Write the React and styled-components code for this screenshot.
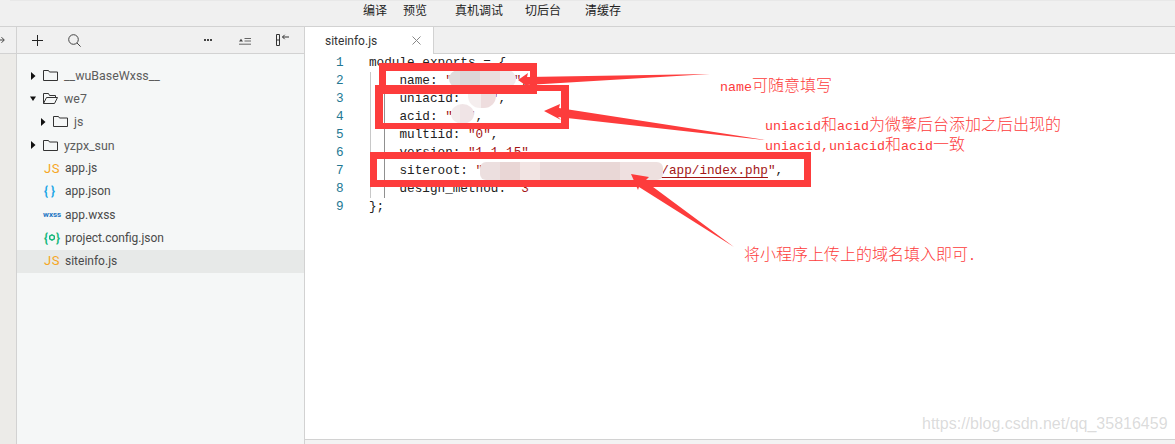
import React from 'react';
import styled, { createGlobalStyle } from 'styled-components';

const RED = '#fd3c3c';

const GlobalStyle = createGlobalStyle`
  html, body { margin: 0; padding: 0; background: #fff; }
  body { width: 1175px; height: 444px; overflow: hidden; font-family: Roboto, "Noto Sans CJK SC", sans-serif; }
`;

const tree = [
  { name: '__wuBaseWxss__', folder: 'closed', depth: 0 },
  { name: 'we7', folder: 'open', depth: 0 },
  { name: 'js', folder: 'closed', depth: 1 },
  { name: 'yzpx_sun', folder: 'closed', depth: 0 },
  { name: 'app.js', file: 'js' },
  { name: 'app.json', file: 'json' },
  { name: 'app.wxss', file: 'wxss' },
  { name: 'project.config.json', file: 'config' },
  { name: 'siteinfo.js', file: 'js', active: true },
];

function Caret({ open }) {
  return (
    <CaretBox viewBox="0 0 6 8">
      {open ? <path d="M0 1.5h6L3 6z" fill="#111" /> : <path d="M1 0l4.5 4L1 8z" fill="#111" />}
    </CaretBox>
  );
}

function Folder({ open }) {
  return (
    <FolderBox viewBox="0 0 15 11" fill="none" stroke="#333" strokeWidth="1">
      {open
        ? <path d="M.5 10.5V.5h5l1 2h6v2M.5 10.5h11l3-6H3.5z" />
        : <path d="M.5 10.5V.5h5l1 1.5h8v8.5z" />}
    </FolderBox>
  );
}

function FileIcon({ type }) {
  if (type === 'js') return <JsIcon>JS</JsIcon>;
  if (type === 'json') return <JsonIcon>{'{ }'}</JsonIcon>;
  if (type === 'wxss') return <WxssIcon>wxss</WxssIcon>;
  return (
    <ConfigIcon>
      {'{'}
      <svg width="6" height="7" viewBox="0 0 6 7" fill="none" stroke="#13b77c" strokeWidth="1.4">
        <path d="M3 .8l2.3 1.35v2.7L3 6.2.7 4.85v-2.7z" />
      </svg>
      {'}'}
    </ConfigIcon>
  );
}

// builds hard colour bands for the blurred-out parts of the code
const bands = (stops) => {
  let from = 0;
  const parts = stops.map(([color, to]) => {
    const part = `${color} ${from}px ${to}px`;
    from = to;
    return part;
  });
  return `linear-gradient(90deg, ${parts.join(', ')})`;
};

const patches = [
  { x: 449, y: 70, w: 67, h: 18, r: '9px', bg: bands([['#e0dcdc', 11], ['#dcd6d7', 31], ['#eadede', 51], ['#f0e8ea', 67]]) },
  { x: 468, y: 91, w: 28, h: 17, r: '0 0 12px 12px', bg: bands([['#f5eeee', 13], ['#eeddde', 28]]) },
  { x: 451, y: 104, w: 23, h: 20, r: '50%', bg: bands([['#f3ecec', 9], ['#f0e4e6', 23]]) },
  { x: 480, y: 162, w: 183, h: 18, r: '6px', bg: bands([['#ecdfdf', 20], ['#e9d6d5', 40], ['#f2e4e3', 60], ['#ead9d9', 120], ['#e9d7d6', 140], ['#efe0e0', 160], ['#eee0df', 183]]) },
];

export default function App() {
  const code = [
    { text: <>module exports = {'{'}</> },
    { text: <>    name: <Str>"        "</Str>,</>, guide: true },
    { text: <>    uniacid: <Str>"  "</Str>,</>, guide: true },
    { text: <>    acid: <Str>"  "</Str>,</>, guide: true },
    { text: <>    multiid: <Str>"0"</Str>,</>, guide: true },
    { text: <>    version: <Str>"1.1.15"</Str>,</>, guide: true },
    { text: <>    siteroot: <Str>"                       <Link>/app/index.php</Link>"</Str>,</>, guide: true },
    { text: <>    design_method: <Str>"3"</Str></>, guide: true },
    { text: <>{'};'}</> },
  ];

  return (
    <Page>
      <GlobalStyle />
      <TopBar>
        <TopEdge />
        <TopMenu>
          <TopItem $gap={16}>编译</TopItem>
          <TopItem $gap={28}>预览</TopItem>
          <TopItem $gap={22}>真机调试</TopItem>
          <TopItem $gap={24}>切后台</TopItem>
          <TopItem>清缓存</TopItem>
        </TopMenu>
      </TopBar>
      <Body>
        <Rail>
          <RailHead>
            <svg width="6" height="8" viewBox="0 0 6 8" fill="none" stroke="#444" strokeWidth="1">
              <path d="M0 4h5M2.5 1.2L5.3 4 2.5 6.8" />
            </svg>
          </RailHead>
        </Rail>
        <Sidebar>
          <SideTools>
            <ToolIcon $left={15} width="11" height="11" viewBox="0 0 11 11" stroke="#222" fill="none">
              <path d="M5.5 0v11M0 5.5h11" />
            </ToolIcon>
            <ToolIcon $left={25} width="13" height="13" viewBox="0 0 13 13" stroke="#444" fill="none">
              <circle cx="5.5" cy="5.5" r="4.8" />
              <path d="M9 9l3.6 3.6" />
            </ToolIcon>
            <ToolIcon $left={123} width="8" height="3" viewBox="0 0 8 3" fill="#444">
              <path d="M0 0h2v2H0zM3 0h2v2H3zM6 0h2v2H6z" />
            </ToolIcon>
            <ToolIcon $left={27} width="12" height="9" viewBox="0 0 12 9" fill="none" stroke="#666">
              <path d="M5.5 2.5h6.5M5.5 5h6.5M0 8.2h12" />
              <path d="M0 5.4l2-2.6 2 2.6z" fill="#444" stroke="none" />
            </ToolIcon>
            <ToolIcon $left={25} width="13" height="12" viewBox="0 0 13 12" fill="none" stroke="#333">
              <path d="M.5.5h3v11h-3zM.5 6h3" />
              <path d="M13 3H6.5M8.7.8L6.5 3l2.2 2.2" />
            </ToolIcon>
          </SideTools>
          <Tree>
            {tree.map((item) => (
              <TreeRow key={item.name} $active={item.active} $depth={item.depth || 0}>
                {item.folder ? (
                  <>
                    <Caret open={item.folder === 'open'} />
                    <Folder open={item.folder === 'open'} />
                    <FolderName>{item.name}</FolderName>
                  </>
                ) : (
                  <>
                    <FileSlot><FileIcon type={item.file} /></FileSlot>
                    <FileName>{item.name}</FileName>
                  </>
                )}
              </TreeRow>
            ))}
          </Tree>
        </Sidebar>
        <Editor>
          <TabBar>
            <Tab>
              siteinfo.js
              <svg width="9" height="9" viewBox="0 0 9 9" stroke="#888" fill="none">
                <path d="M.5.5l8 8M8.5.5l-8 8" />
              </svg>
            </Tab>
          </TabBar>
          <CodeArea>
            {code.map((line, i) => (
              <CodeRow key={i}>
                <LineNo>{i + 1}</LineNo>
                <CodeText $guide={line.guide}>{line.text}</CodeText>
              </CodeRow>
            ))}
          </CodeArea>
          <BottomStrip />
        </Editor>
      </Body>

      {patches.map((p, i) => (
        <Patch key={i} $x={p.x} $y={p.y} $w={p.w} $h={p.h} $r={p.r} $bg={p.bg} />
      ))}
      <Frame $x={379} $y={63} $w={158} $h={31} $tx={7} $ty={8} />
      <Frame $x={375} $y={85} $w={194} $h={44} $tx={8} $ty={6} />
      <Frame $x={370} $y={152} $w={441} $h={35} $tx={7} $ty={7} />

      <Arrows width="1175" height="444" viewBox="0 0 1175 444" fill={RED}>
        <path d="M518 80l10-7-1 4 183-3-183 11 4 4z" />
        <path d="M544 111l16-7-1 4 206 32-207-23 3 3z" />
        <path d="M631 174l18 3-4 4 89 66-95-60-1 3z" />
      </Arrows>

      <Note $x={720} $y={77}><Lat>name</Lat>可随意填写</Note>
      <Note $x={765} $y={116}><Lat>uniacid</Lat>和<Lat>acid</Lat>为微擎后台添加之后出现的</Note>
      <Note $x={765} $y={136}><Lat>uniacid,uniacid</Lat>和<Lat>acid</Lat>一致</Note>
      <Note $x={744} $y={246}>将小程序上传上的域名填入即可<Lat>.</Lat></Note>
      <Watermark>https://blog.csdn.net/qq_35816459</Watermark>
    </Page>
  );
}

const Page = styled.div`
  position: relative;
  width: 1175px;
  height: 444px;
  display: flex;
  flex-direction: column;
  overflow: hidden;
`;

const TopBar = styled.div`
  position: relative;
  height: 26px;
  flex: none;
  background: #f0f0f0;
  border-bottom: 1px solid #d2d2d2;
`;

const TopEdge = styled.div`
  position: absolute;
  left: 10px;
  right: 0;
  top: 0;
  height: 1px;
  background: #e8e8e8;
`;

const TopMenu = styled.div`
  display: flex;
  height: 100%;
  align-items: center;
  padding-left: 363px;
  padding-bottom: 4px;
  box-sizing: border-box;
`;

const TopItem = styled.span`
  font-size: 12px;
  line-height: 16px;
  color: #222;
  margin-right: ${(p) => p.$gap || 0}px;
`;

const Body = styled.div`
  flex: 1;
  display: flex;
  min-height: 0;
`;

const Rail = styled.div`
  width: 16px;
  flex: none;
  background: #ecebe8;
  border-right: 1px solid #d2d2d2;
`;

const RailHead = styled.div`
  height: 26px;
  background: #f0f0f0;
  border-bottom: 1px solid #d2d2d2;
  display: flex;
  align-items: center;
  svg { margin-left: -1px; }
`;

const Sidebar = styled.div`
  width: 287px;
  flex: none;
  background: #f5f7f7;
  border-right: 1px solid #d2d2d2;
`;

const SideTools = styled.div`
  height: 26px;
  background: #f0f0f0;
  border-bottom: 1px solid #d2d2d2;
  display: flex;
  align-items: center;
`;

const ToolIcon = styled.svg`
  flex: none;
  margin-left: ${(p) => p.$left}px;
`;

const Tree = styled.div`
  padding-top: 10.6px;
`;

const TreeRow = styled.div`
  height: 23.15px;
  box-sizing: border-box;
  padding-bottom: 1px;
  display: flex;
  align-items: center;
  padding-left: ${(p) => 13 + p.$depth * 10}px;
  background: ${(p) => (p.$active ? '#e7e9e8' : 'transparent')};
`;

const CaretBox = styled.svg`
  width: 6px;
  height: 8px;
  flex: none;
  margin-right: 7px;
`;

const FolderBox = styled.svg`
  width: 15px;
  height: 11px;
  flex: none;
  margin-right: 6px;
`;

const FolderName = styled.span`
  font-size: 12.4px;
  color: #5c5c5c;
`;

const FileSlot = styled.span`
  width: 20px;
  flex: none;
  margin-left: 10px;
  display: flex;
  align-items: center;
`;

const FileName = styled.span`
  font-size: 12px;
  color: #4a4a4a;
  margin-left: 5px;
`;

const JsIcon = styled.span`
  font-size: 13px;
  margin-left: 4px;
  color: #f5a623;
  letter-spacing: 0.5px;
`;

const JsonIcon = styled.span`
  font-size: 12px;
  font-weight: 700;
  margin-left: 4px;
  color: #1ba6e6;
  white-space: nowrap;
`;

const WxssIcon = styled.span`
  font-size: 8px;
  font-weight: 700;
  color: #1f78c4;
  margin-left: 3px;
`;

const ConfigIcon = styled.span`
  display: flex;
  align-items: center;
  gap: 1px;
  font-size: 12px;
  font-weight: 700;
  margin-left: 4px;
  color: #13b77c;
`;

const Editor = styled.div`
  flex: 1;
  min-width: 0;
  display: flex;
  flex-direction: column;
  background: #fff;
`;

const TabBar = styled.div`
  height: 27px;
  flex: none;
  box-sizing: border-box;
  background: #f0f0f0;
  border-bottom: 1px solid #d2d2d2;
`;

const Tab = styled.div`
  width: 129px;
  height: 27px;
  box-sizing: border-box;
  background: #fff;
  border-right: 1px solid #d2d2d2;
  padding: 0 12px 0 20px;
  display: flex;
  align-items: center;
  justify-content: space-between;
  font-size: 12px;
  color: #333;
`;

const CodeArea = styled.div`
  flex: 1;
`;

const CodeRow = styled.div`
  display: flex;
  height: 18px;
  line-height: 18px;
`;

const LineNo = styled.span`
  width: 64px;
  flex: none;
  box-sizing: border-box;
  padding-left: 31px;
  font-family: "Liberation Mono", monospace;
  font-size: 12.7px;
  color: #237893;
`;

const CodeText = styled.span`
  flex: 1;
  white-space: pre;
  font-family: "Liberation Mono", monospace;
  font-size: 12.7px;
  color: #222;
  background-image: ${(p) => (p.$guide
    ? 'linear-gradient(#c8c8c8, #c8c8c8), linear-gradient(#909090, #909090)'
    : 'none')};
  background-size: 1px 100%, 1px 100%;
  background-position: 1px 0, 15px 0;
  background-repeat: no-repeat;
`;

const Str = styled.span`
  color: #a31515;
`;

const Link = styled.span`
  margin-left: 3px;
  text-decoration: underline;
  text-underline-offset: 3px;
`;

const BottomStrip = styled.div`
  height: 4px;
  flex: none;
  background: #f3f3f3;
  border-top: 1px solid #d2d2d2;
`;

const Patch = styled.div`
  position: absolute;
  left: ${(p) => p.$x}px;
  top: ${(p) => p.$y}px;
  width: ${(p) => p.$w}px;
  height: ${(p) => p.$h}px;
  border-radius: ${(p) => p.$r};
  background: ${(p) => p.$bg};
`;

const Frame = styled.div`
  position: absolute;
  box-sizing: border-box;
  left: ${(p) => p.$x}px;
  top: ${(p) => p.$y}px;
  width: ${(p) => p.$w}px;
  height: ${(p) => p.$h}px;
  border: solid ${RED};
  border-width: ${(p) => p.$ty}px ${(p) => p.$tx}px;
`;

const Arrows = styled.svg`
  position: absolute;
  left: 0;
  top: 0;
  pointer-events: none;
`;

const Note = styled.div`
  position: absolute;
  left: ${(p) => p.$x}px;
  top: ${(p) => p.$y}px;
  white-space: nowrap;
  font-family: "Liberation Mono", "Noto Sans CJK SC", monospace;
  font-size: 16px;
  line-height: 20px;
  font-weight: 300;
  color: ${RED};
`;

const Lat = styled.span`
  font-size: 13.33px;
`;

const Watermark = styled.div`
  position: absolute;
  left: 922px;
  top: 414px;
  font-family: "Liberation Sans", sans-serif;
  font-size: 16px;
  line-height: 20px;
  color: rgba(175, 175, 175, 0.45);
  white-space: nowrap;
`;
